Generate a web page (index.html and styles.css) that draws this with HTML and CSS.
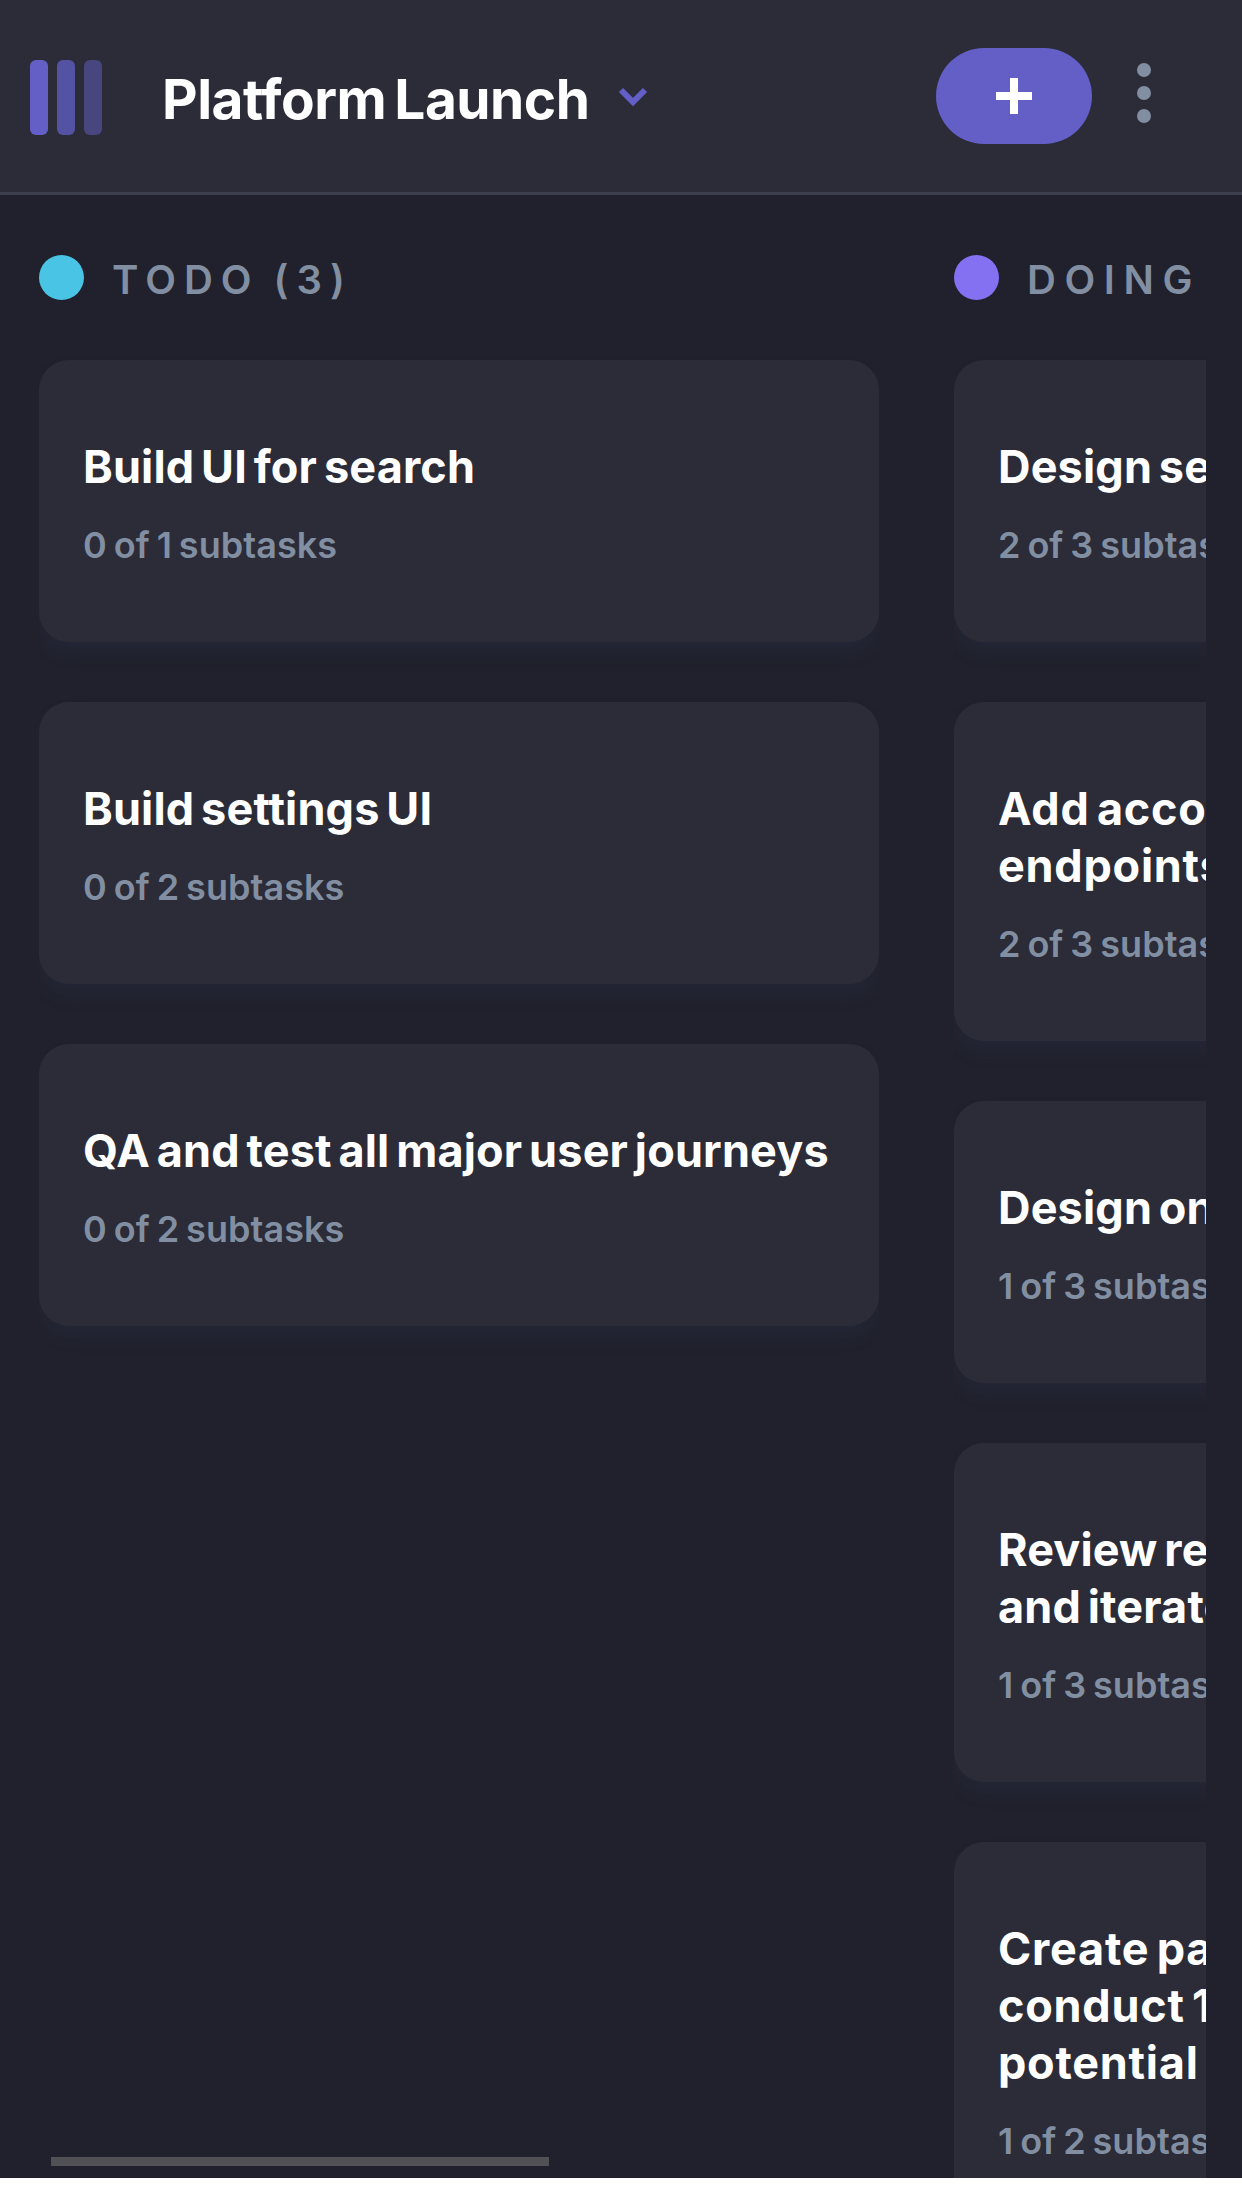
FILE: index.html
```html
<!DOCTYPE html>
<html lang="en">
<head>
<meta charset="utf-8">
<title>Platform Launch</title>
<link rel="stylesheet" href="styles.css">
</head>
<body>
<header class="header">
  <svg class="logo" width="72" height="75" viewBox="0 0 72 75" fill="#635fc7">
    <rect width="18" height="75" rx="6"/>
    <rect x="27" width="18" height="75" rx="6" opacity=".75"/>
    <rect x="54" width="18" height="75" rx="6" opacity=".5"/>
  </svg>
  <h1 class="board-name">Platform Launch</h1>
  <svg class="chevron" width="30" height="21" viewBox="0 0 10 7" fill="none" stroke="#635fc7" stroke-width="2"><path d="m1 1 4 4 4-4"/></svg>
  <button class="add" aria-label="Add task">
    <svg width="36" height="36" viewBox="0 0 36 36" fill="#fff"><path d="M14 0h8v14h14v8H22v14h-8V22H0v-8h14z"/></svg>
  </button>
  <svg class="menu" width="14" height="60" viewBox="0 0 14 60" fill="#828fa3"><circle cx="7" cy="7" r="7"/><circle cx="7" cy="30" r="7"/><circle cx="7" cy="53" r="7"/></svg>
</header>
<main class="board">
  <div class="columns">
    <section class="column">
      <h2 class="column-head"><span class="dot dot-todo"></span><span class="column-name column-name-todo">TODO (3)</span></h2>
      <article class="card"><h3 class="task">Build UI for search</h3><p class="subtasks">0 of 1 subtasks</p></article>
      <article class="card"><h3 class="task">Build settings UI</h3><p class="subtasks">0 of 2 subtasks</p></article>
      <article class="card"><h3 class="task">QA and test all major user journeys</h3><p class="subtasks">0 of 2 subtasks</p></article>
    </section>
    <section class="column">
      <h2 class="column-head"><span class="dot dot-doing"></span><span class="column-name">DOING (6)</span></h2>
      <article class="card"><h3 class="task">Design settings and search pages</h3><p class="subtasks">2 of 3 subtasks</p></article>
      <article class="card"><h3 class="task task-wide">Add account management<br>endpoints</h3><p class="subtasks">2 of 3 subtasks</p></article>
      <article class="card"><h3 class="task">Design onboarding flow</h3><p class="subtasks">1 of 3 subtasks</p></article>
      <article class="card"><h3 class="task">Review results of usability tests<br>and iterate</h3><p class="subtasks">1 of 3 subtasks</p></article>
      <article class="card"><h3 class="task task-wide">Create paper prototypes and<br>conduct 10 usability tests with<br>potential customers</h3><p class="subtasks">1 of 2 subtasks</p></article>
    </section>
  </div>
  <div class="scrollbar"></div>
</main>
</body>
</html>
```
FILE: styles.css
```css
* { box-sizing: border-box; }
body, h1, h2, h3, p { margin: 0; }
body {
  background: #fff;
  font-family: Inter, "Open Sans", sans-serif;
  overflow: hidden;
}
.header {
  display: flex;
  align-items: center;
  height: 195px;
  padding: 0 91px 0 30px;
  background: #2b2c37;
  border-bottom: 3px solid #3e3f4e;
}
.logo { margin-top: 3px; }
.board-name {
  margin: 6px 0 0 60px;
  width: 427px;
  color: #fff;
  font-size: 55px;
  font-weight: 700;
  line-height: 69px;
  letter-spacing: -.5px;
  word-spacing: -4.5px;
  white-space: nowrap;
}
.chevron { margin: 3px 0 0 29px; }
.add {
  display: flex;
  align-items: center;
  justify-content: center;
  width: 156px;
  height: 96px;
  margin-left: auto;
  padding: 0;
  border: 0;
  border-radius: 48px;
  background: #635fc7;
}
.menu { margin: 0 0 6px 45px; }
.board {
  position: relative;
  height: 1983px;
  padding: 60px 36px 0 39px;
  background: #20212c;
  overflow: hidden;
}
.columns {
  display: flex;
  gap: 75px;
  height: 1923px;
  overflow: hidden;
}
.column {
  flex: none;
  display: flex;
  flex-direction: column;
  gap: 60px;
  width: 840px;
  overflow: hidden;
}
.column-head {
  display: flex;
  align-items: center;
  gap: 28px;
  flex: none;
  height: 45px;
}
.dot { width: 45px; height: 45px; border-radius: 50%; }
.dot-todo { background: #49c4e5; }
.dot-doing { background: #8471f2; }
.column-name {
  padding-top: 3px;
  color: #828fa3;
  font-size: 40px;
  font-weight: 600;
  line-height: 45px;
  letter-spacing: 8.6px;
  white-space: nowrap;
}
.column-name-todo { letter-spacing: 8px; word-spacing: -4px; }
.card {
  flex: none;
  padding: 78px 43px 74px 44px;
  border-radius: 30px;
  background: #2b2c37;
  box-shadow: 0 12px 18px rgba(54, 78, 126, .1);
}
.task {
  color: #fff;
  font-size: 45px;
  font-weight: 700;
  line-height: 57px;
  letter-spacing: .15px;
  word-spacing: -4px;
  white-space: nowrap;
}
.task-wide { letter-spacing: .75px; }
.subtasks {
  margin-top: 28px;
  color: #828fa3;
  font-size: 36px;
  font-weight: 600;
  line-height: 45px;
  letter-spacing: .05px;
  word-spacing: -2.2px;
}
.scrollbar {
  position: absolute;
  left: 51px;
  bottom: 12px;
  width: 498px;
  height: 9px;
  background: #515155;
}
```
